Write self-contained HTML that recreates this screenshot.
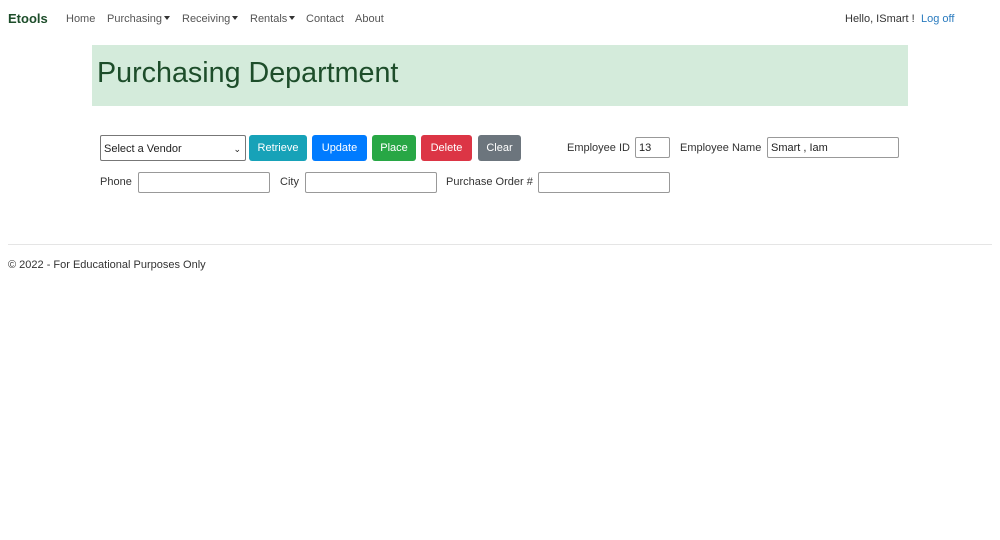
<!DOCTYPE html>
<html><head><style>
body{margin:0;width:1000px;height:540px;background:#fff;font-family:"Liberation Sans",sans-serif;font-size:11px;color:#333;position:relative;overflow:hidden}
.a{position:absolute;white-space:nowrap}
.nav{color:#555;font-size:11px;top:13px}
.car{display:inline-block;border-left:3.5px solid transparent;border-right:3.5px solid transparent;border-top:4px solid #333;vertical-align:2px;margin-left:2px}
.btn{position:absolute;top:135px;height:26px;border-radius:3px;color:#fff;font-size:11px;line-height:27px;text-align:center}
.inp{position:absolute;border:1px solid #999;border-radius:2px;height:19px;background:#fff;box-sizing:border-box;font-size:11px;line-height:20px;padding-left:3px;color:#222}
</style></head><body>
<div class="a" style="left:8px;top:11px;font-size:13px;font-weight:bold;color:#1d4d2a">Etools</div>
<div class="a nav" style="left:66px">Home</div>
<div class="a nav" style="left:107px">Purchasing<span class="car"></span></div>
<div class="a nav" style="left:182px">Receiving<span class="car"></span></div>
<div class="a nav" style="left:250px">Rentals<span class="car"></span></div>
<div class="a nav" style="left:306px">Contact</div>
<div class="a nav" style="left:355px">About</div>
<div class="a nav" style="left:845px;color:#333">Hello, ISmart !</div>
<div class="a nav" style="left:921px;color:#2a7bbf">Log off</div>
<div class="a" style="left:92px;top:45px;width:816px;height:61px;background:#d4ebdb"></div>
<div class="a" style="left:97px;top:57px;font-size:28.7px;color:#1d4d2a">Purchasing Department</div>
<div class="inp" style="left:100px;top:135px;width:146px;height:26px;line-height:27px;border-color:#777">Select a Vendor<span style="position:absolute;right:4px;font-size:9px">&#8964;</span></div>
<div class="btn" style="left:249px;width:58px;background:#17a2b8">Retrieve</div>
<div class="btn" style="left:312px;width:55px;background:#007bff">Update</div>
<div class="btn" style="left:372px;width:44px;background:#28a745">Place</div>
<div class="btn" style="left:421px;width:51px;background:#dc3545">Delete</div>
<div class="btn" style="left:478px;width:43px;background:#6c757d">Clear</div>
<div class="a" style="left:567px;top:142px">Employee ID</div>
<div class="inp" style="left:635px;top:137px;width:35px;height:21px">13</div>
<div class="a" style="left:680px;top:142px">Employee Name</div>
<div class="inp" style="left:767px;top:137px;width:132px;height:21px">Smart , Iam</div>
<div class="a" style="left:100px;top:176px">Phone</div>
<div class="inp" style="left:138px;top:172px;width:132px;height:21px"></div>
<div class="a" style="left:280px;top:176px">City</div>
<div class="inp" style="left:305px;top:172px;width:132px;height:21px"></div>
<div class="a" style="left:446px;top:176px">Purchase Order #</div>
<div class="inp" style="left:538px;top:172px;width:132px;height:21px"></div>
<div class="a" style="left:8px;top:244px;width:984px;border-top:1px solid #e5e5e5"></div>
<div class="a" style="left:8px;top:259px">© 2022 - For Educational Purposes Only</div>
</body></html>
